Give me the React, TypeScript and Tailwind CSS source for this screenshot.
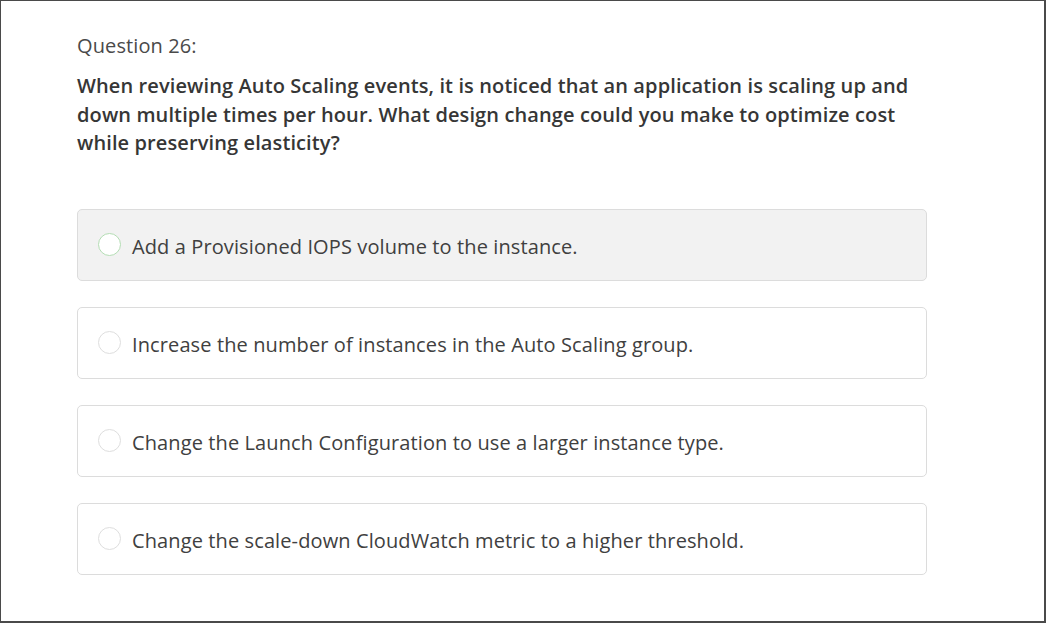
import { useState } from 'react';

const options = [
  'Add a Provisioned IOPS volume to the instance.',
  'Increase the number of instances in the Auto Scaling group.',
  'Change the Launch Configuration to use a larger instance type.',
  'Change the scale-down CloudWatch metric to a higher threshold.',
];

const App = () => {
  const [hovered] = useState(0);

  return (
    <div
      className="h-[623px] w-[1046px] border-t border-l border-r-2 border-b-2 border-[#4a4a4a] bg-white text-[#3c3c3c] tracking-[0.11px]"
      style={{ fontFamily: '"Open Sans", "Liberation Sans", sans-serif' }}
    >
      <div className="w-[926px] pl-[76px] pt-[31px]">
        <p className="text-[20px] leading-[27px] text-[#4a4a4a]">Question 26:</p>
        <p className="mt-[13px] text-[20px] font-semibold leading-[28.5px] text-[#363636]">
          When reviewing Auto Scaling events, it is noticed that an application is scaling up and down multiple
          times per hour. What design change could you make to optimize cost while preserving elasticity?
        </p>

        <div className="mt-[51px] flex flex-col gap-[26px]">
          {options.map((text, i) => (
            <div
              key={text}
              className={`flex h-[72px] items-center rounded-[5px] border border-[#dcdcdc] pl-[20px] ${
                i === hovered ? 'bg-[#f2f2f2]' : 'bg-white'
              }`}
            >
              <span
                className={`h-[23px] w-[23px] shrink-0 rounded-full border bg-white ${
                  i === hovered ? 'border-[#b4ddb4]' : 'border-[#dedede]'
                }`}
              />
              <span className="ml-[11px] pt-[3px] text-[20px] leading-[27px] text-[#404040]">{text}</span>
            </div>
          ))}
        </div>
      </div>
    </div>
  );
};

export default App;
